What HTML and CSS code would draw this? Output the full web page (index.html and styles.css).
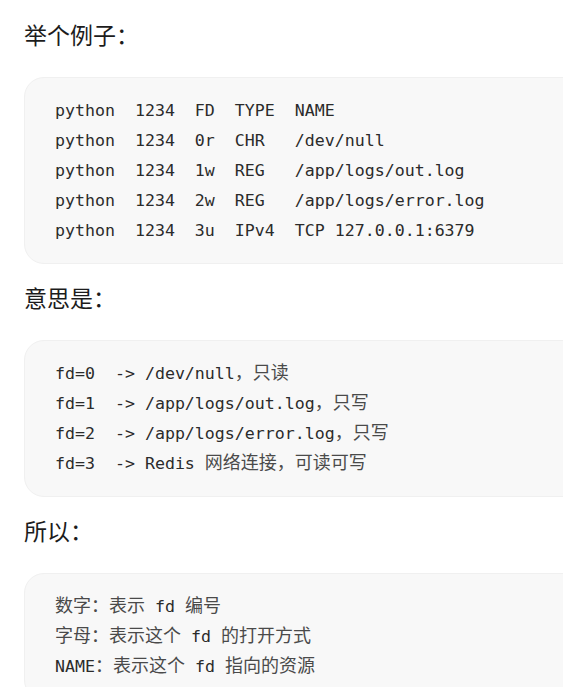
FILE: index.html
```html
<!DOCTYPE html>
<html lang="zh-CN">
<head>
<meta charset="utf-8">
<title>fd 示例</title>
<link rel="stylesheet" href="styles.css">
</head>
<body>
<main class="doc">
  <p class="heading">举个例子：</p>
  <div class="code">
    <div class="line">python  1234  FD  TYPE  NAME</div>
    <div class="line">python  1234  0r  CHR   /dev/null</div>
    <div class="line">python  1234  1w  REG   /app/logs/out.log</div>
    <div class="line">python  1234  2w  REG   /app/logs/error.log</div>
    <div class="line">python  1234  3u  IPv4  TCP 127.0.0.1:6379</div>
  </div>

  <p class="heading">意思是：</p>
  <div class="code">
    <div class="line">fd=0  -&gt; /dev/null<span class="cjk">，只读</span></div>
    <div class="line">fd=1  -&gt; /app/logs/out.log<span class="cjk">，只写</span></div>
    <div class="line">fd=2  -&gt; /app/logs/error.log<span class="cjk">，只写</span></div>
    <div class="line">fd=3  -&gt; Redis <span class="cjk">网络连接，可读可写</span></div>
  </div>

  <p class="heading">所以：</p>
  <div class="code">
    <div class="line"><span class="cjk">数字：表示</span> fd <span class="cjk">编号</span></div>
    <div class="line"><span class="cjk">字母：表示这个</span> fd <span class="cjk">的打开方式</span></div>
    <div class="line">NAME<span class="cjk">：表示这个</span> fd <span class="cjk">指向的资源</span></div>
  </div>
</main>
</body>
</html>
```

FILE: styles.css
```css
html, body {
  margin: 0;
  padding: 0;
  background: #ffffff;
  overflow: hidden;
}

.doc {
  padding: 18px 0 0 24px;
  display: flex;
  flex-direction: column;
}

.heading {
  margin: 0 0 27px 0;
  font-family: "Noto Sans CJK SC", "Noto Sans", sans-serif;
  font-size: 23px;
  line-height: 32px;
  color: #1c1c1c;
}

.code {
  margin: 0 -40px 17px 0;
  padding: 18px 30px 17px 30px;
  background: #f8f8f8;
  border: 1px solid #f0f0f0;
  border-radius: 20px;
  font-family: "DejaVu Sans Mono", "Liberation Mono", monospace;
  font-size: 16.6px;
  color: #2b2b2b;
  display: flex;
  flex-direction: column;
}

.line {
  height: 30px;
  line-height: 30px;
  white-space: pre;
  overflow: visible;
}

.cjk {
  font-family: "Noto Sans CJK SC", sans-serif;
  font-size: 18px;
  line-height: 0;
  color: #4a4a4a;
}
```
